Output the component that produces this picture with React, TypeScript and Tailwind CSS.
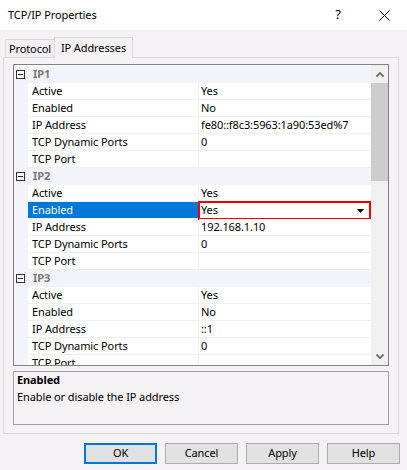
import React from "react";

type Prop = [string, string];
type Group = { name: string; rows: Prop[] };

const groups: Group[] = [
  {
    name: "IP1",
    rows: [
      ["Active", "Yes"],
      ["Enabled", "No"],
      ["IP Address", "fe80::f8c3:5963:1a90:53ed%7"],
      ["TCP Dynamic Ports", "0"],
      ["TCP Port", ""],
    ],
  },
  {
    name: "IP2",
    rows: [
      ["Active", "Yes"],
      ["Enabled", "Yes"],
      ["IP Address", "192.168.1.10"],
      ["TCP Dynamic Ports", "0"],
      ["TCP Port", ""],
    ],
  },
  {
    name: "IP3",
    rows: [
      ["Active", "Yes"],
      ["Enabled", "No"],
      ["IP Address", "::1"],
      ["TCP Dynamic Ports", "0"],
      ["TCP Port", ""],
    ],
  },
];

function Collapse() {
  return (
    <div className="w-[9px] h-[9px] border border-[#333] flex items-center justify-center bg-white">
      <div className="w-[5px] h-px bg-[#222]" />
    </div>
  );
}

function CategoryRow({ name }: { name: string }) {
  return (
    <div className="flex items-center h-[17px] bg-[#f3f4fb]">
      <div className="ml-[2px] w-[17px]">
        <Collapse />
      </div>
      <span className="font-bold text-[#7a7a7a]">{name}</span>
    </div>
  );
}

function PropRow({ label, value, editing }: { label: string; value: string; editing?: boolean }) {
  return (
    <div className="flex h-[17px]">
      <div className="w-[14px] bg-[#f3f4fb]" />
      <div className="flex flex-1 border-b border-[#f0f0f0]">
        <div
          className={
            editing
              ? "w-[171px] pl-[4px] bg-[#0078d7] text-white leading-[16px]"
              : "w-[171px] pl-[4px] bg-white leading-[16px] border-r border-[#f0f0f0]"
          }
        >
          {label}
        </div>
        <div className="relative flex-1 pl-[2px] bg-white leading-[16px]">
          {value}
          {editing && (
            <div className="absolute -top-px -bottom-[2px] -left-px right-0 border-2 border-[#f00000] flex justify-end items-center pr-[4px]">
              <svg width="8" height="4" viewBox="0 0 8 4">
                <polygon points="0,0 7,0 3.5,4" fill="#000" />
              </svg>
            </div>
          )}
        </div>
      </div>
    </div>
  );
}

function Chevron({ up }: { up?: boolean }) {
  return (
    <svg width="8" height="5" viewBox="0 0 8 5">
      <polyline
        points={up ? "0.5,4.5 4,1 7.5,4.5" : "0.5,0.5 4,4 7.5,0.5"}
        fill="none"
        stroke="#606060"
        strokeWidth="1.6"
      />
    </svg>
  );
}

function Button({ label, primary }: { label: string; primary?: boolean }) {
  return (
    <div
      className={
        primary
          ? "w-[73px] h-[21px] flex items-center justify-center bg-[#e1e1e1] border-2 border-[#0078d7]"
          : "w-[73px] h-[21px] flex items-center justify-center bg-[#e1e1e1] border border-[#adadad]"
      }
    >
      {label}
    </div>
  );
}

export default function App() {
  return (
    <div className="w-[407px] h-[470px] bg-[#f5f2f5] font-['Noto_Sans',sans-serif] text-[11px] tracking-[-0.1px] text-black overflow-hidden">
      {/* title bar */}
      <div className="h-[30px] bg-white flex items-center">
        <span className="pl-[8px]">TCP/IP Properties</span>
        <div className="ml-auto flex">
          <div className="w-[46px] flex items-center justify-center text-[13px]">?</div>
          <div className="w-[46px] flex items-center justify-center">
            <svg width="11" height="11" viewBox="0 0 11 11">
              <path d="M0.5 0.5 L10.5 10.5 M10.5 0.5 L0.5 10.5" stroke="#000" strokeWidth="1" />
            </svg>
          </div>
        </div>
      </div>

      <div className="pl-[3px] pt-[7px] w-[404px]">
        {/* tabs */}
        <div className="flex items-end pl-[2px]">
          <div className="w-[49px] h-[18px] border-l border-t border-[#d9d9d9] bg-[#f2f0f2] flex items-center justify-center pt-px">
            Protocol
          </div>
          <div className="relative z-10 w-[79px] h-[21px] -mb-px border-l border-t border-r border-[#d9d9d9] bg-[#f5f2f5] flex items-start pt-[2px] justify-center">
            IP Addresses
          </div>
        </div>

        {/* tab page */}
        <div className="w-[396px] h-[377px] border border-[#d9d9d9] pt-[6px] px-[9px]">
          <div className="h-[302px] border border-[#828282] flex bg-white">
            <div className="flex-1 h-[300px] overflow-hidden pt-px">
              {groups.map((g) => (
                <div key={g.name}>
                  <CategoryRow name={g.name} />
                  {g.rows.map(([label, value]) => (
                    <PropRow
                      key={label}
                      label={label}
                      value={value}
                      editing={g.name === "IP2" && label === "Enabled"}
                    />
                  ))}
                </div>
              ))}
            </div>
            <div className="w-[17px] bg-[#f0f0f0] flex flex-col">
              <div className="h-[18px] flex items-center justify-center">
                <Chevron up />
              </div>
              <div className="h-[98px] bg-[#cdcdcd]" />
              <div className="flex-1" />
              <div className="h-[18px] flex items-center justify-center">
                <Chevron />
              </div>
            </div>
          </div>

          {/* description pane */}
          <div className="mt-[5px] h-[54px] border border-[#a0a0a0] px-[3px] leading-[16px]">
            <div className="font-bold">Enabled</div>
            <div className="mt-px">Enable or disable the IP address</div>
          </div>
        </div>

        {/* buttons */}
        <div className="mt-[9px] flex justify-end gap-[8px] pr-[4px]">
          <Button label="OK" primary />
          <Button label="Cancel" />
          <Button label="Apply" />
          <Button label="Help" />
        </div>
      </div>
    </div>
  );
}
